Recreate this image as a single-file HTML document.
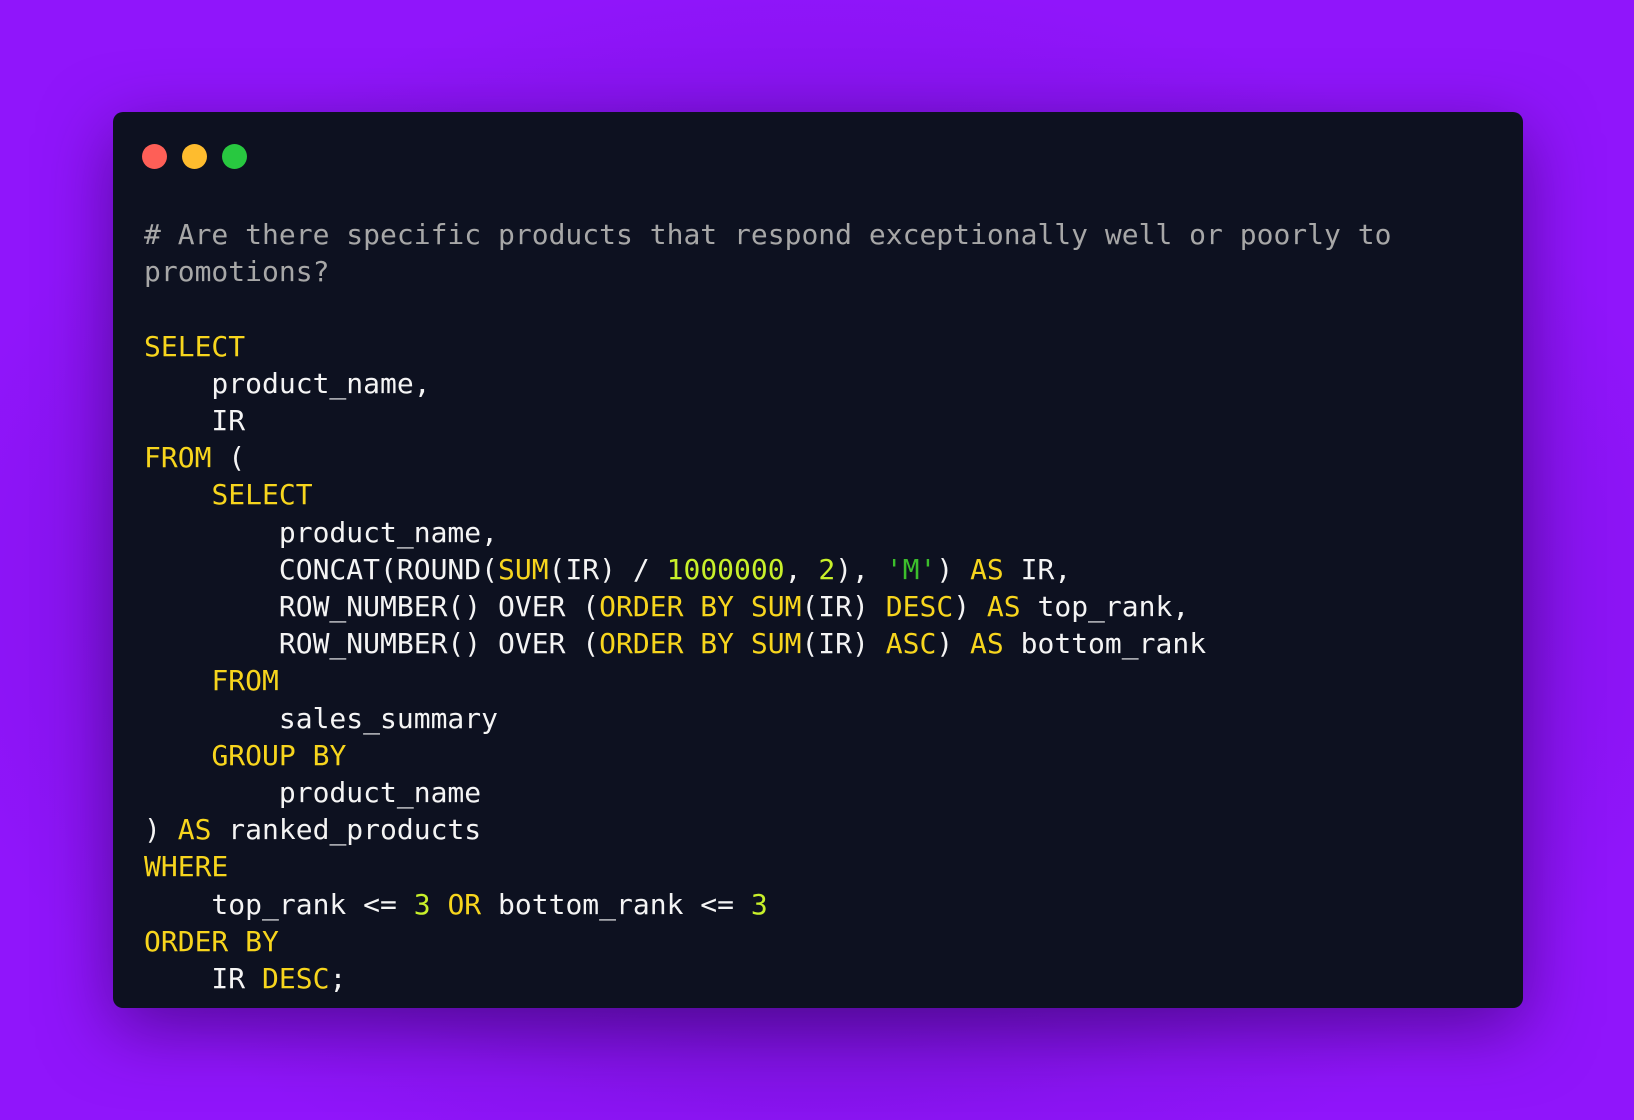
<!DOCTYPE html>
<html><head><meta charset="utf-8"><style>
html,body{margin:0;padding:0;}
body{width:1634px;height:1120px;overflow:hidden;position:relative;
background:radial-gradient(ellipse 900px 620px at 817px 600px,#5a0ca6 0%,#6f10c8 50%,#8a14f2 85%,#9015fb 100%);}
.card{position:absolute;left:113px;top:112px;width:1410px;height:896px;background:#0d1120;border-radius:10px;box-shadow:0 20px 70px rgba(40,0,80,0.55);}
.dot{position:absolute;top:144px;width:25px;height:25px;border-radius:50%;}
pre{position:absolute;left:144px;top:216px;margin:0;font-family:"DejaVu Sans Mono","Liberation Mono",monospace;font-size:28px;line-height:37.2px;color:#f4f4f4;}
.c{color:#a7a7a7}.k{color:#f7d51d}.n{color:#c8f02a}.s{color:#3cbf2c}
</style></head><body>
<div class="card"></div>
<div class="dot" style="left:142px;background:#fe5f57"></div>
<div class="dot" style="left:182px;background:#febc2e"></div>
<div class="dot" style="left:222px;background:#28c840"></div>
<pre><span class="c"># Are there specific products that respond exceptionally well or poorly to
promotions?</span>

<span class="k">SELECT</span>
    product_name,
    IR
<span class="k">FROM</span> (
    <span class="k">SELECT</span>
        product_name,
        CONCAT(ROUND(<span class="k">SUM</span>(IR) / <span class="n">1000000</span>, <span class="n">2</span>), <span class="s">'M'</span>) <span class="k">AS</span> IR,
        ROW_NUMBER() OVER (<span class="k">ORDER BY SUM</span>(IR) <span class="k">DESC</span>) <span class="k">AS</span> top_rank,
        ROW_NUMBER() OVER (<span class="k">ORDER BY SUM</span>(IR) <span class="k">ASC</span>) <span class="k">AS</span> bottom_rank
    <span class="k">FROM</span>
        sales_summary
    <span class="k">GROUP BY</span>
        product_name
) <span class="k">AS</span> ranked_products
<span class="k">WHERE</span>
    top_rank &lt;= <span class="n">3</span> <span class="k">OR</span> bottom_rank &lt;= <span class="n">3</span>
<span class="k">ORDER BY</span>
    IR <span class="k">DESC</span>;</pre>
</body></html>
